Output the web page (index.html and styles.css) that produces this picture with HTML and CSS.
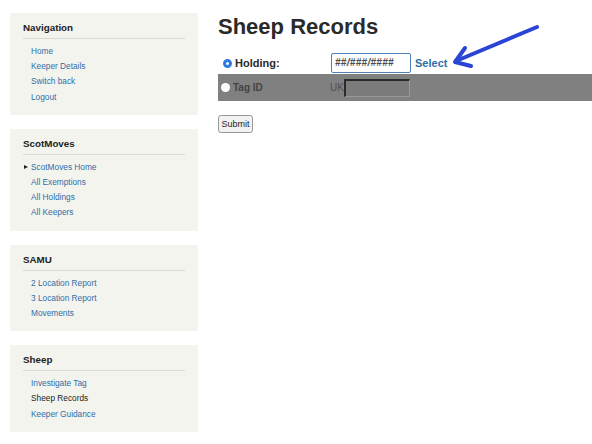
FILE: index.html
```html
<!DOCTYPE html>
<html>
<head>
<meta charset="utf-8">
<link rel="stylesheet" href="styles.css">
</head>
<body>
<div class="page">
  <aside class="sidebar">
    <section class="box">
      <h2 class="box-title">Navigation</h2>
      <ul class="links">
        <li><a href="#">Home</a></li>
        <li><a href="#">Keeper Details</a></li>
        <li><a href="#">Switch back</a></li>
        <li><a href="#">Logout</a></li>
      </ul>
    </section>
    <section class="box">
      <h2 class="box-title">ScotMoves</h2>
      <ul class="links">
        <li class="expanded"><a href="#">ScotMoves Home</a></li>
        <li><a href="#">All Exemptions</a></li>
        <li><a href="#">All Holdings</a></li>
        <li><a href="#">All Keepers</a></li>
      </ul>
    </section>
    <section class="box">
      <h2 class="box-title">SAMU</h2>
      <ul class="links">
        <li><a href="#">2 Location Report</a></li>
        <li><a href="#">3 Location Report</a></li>
        <li><a href="#">Movements</a></li>
      </ul>
    </section>
    <section class="box">
      <h2 class="box-title">Sheep</h2>
      <ul class="links">
        <li><a href="#">Investigate Tag</a></li>
        <li><span class="current">Sheep Records</span></li>
        <li><a href="#">Keeper Guidance</a></li>
      </ul>
    </section>
  </aside>
  <main class="main">
    <h1 class="title">Sheep Records</h1>
    <form class="form">
      <div class="row row-holding">
        <label class="opt"><span class="radio radio-on"></span><span class="opt-label">Holding:</span></label>
        <div class="field">
          <span class="text-input focused">##/###/####</span>
          <a class="select" href="#">Select</a>
        </div>
      </div>
      <div class="row row-tag">
        <label class="opt"><span class="radio radio-off"></span><span class="opt-label tag-label">Tag ID</span></label>
        <div class="field">
          <span class="uk">UK</span><span class="tag-input"></span>
        </div>
      </div>
      <div class="actions">
        <button type="button" class="submit">Submit</button>
      </div>
    </form>
  </main>
</div>
<svg class="arrow" width="592" height="444" viewBox="0 0 592 444">
  <path d="M537 27 L456 61" stroke="#2a44d6" stroke-width="4" stroke-linecap="round" fill="none"/>
  <path d="M465 48 L455 62 L471 66" stroke="#2a44d6" stroke-width="4" stroke-linecap="round" stroke-linejoin="round" fill="none"/>
</svg>
</body>
</html>
```
FILE: styles.css
```css
html, body {
  margin: 0;
  padding: 0;
  background: #fff;
  font-family: "Liberation Sans", Arial, sans-serif;
  color: #222;
}
.page {
  display: flex;
  gap: 20px;
  padding: 13px 0 0 10px;
}
.sidebar {
  width: 188px;
  flex: none;
  display: flex;
  flex-direction: column;
  gap: 14px;
}
.box {
  background: #f4f4ef;
  padding: 8px 13px 10px 13px;
}
.box-title {
  margin: 0;
  font-size: 9.8px;
  line-height: 14px;
  font-weight: bold;
  color: #222;
  padding-bottom: 3px;
  border-bottom: 1px solid #dcdcd6;
}
.links {
  list-style: none;
  margin: 5px 0 0 0;
  padding: 0 0 0 8px;
  font-size: 8.3px;
  line-height: 15.2px;
}
.links a {
  color: #2f6ea6;
  text-decoration: none;
}
.links .current {
  color: #222;
}
.expanded {
  position: relative;
}
.expanded::before {
  content: "";
  position: absolute;
  left: -7px;
  top: 5px;
  border-left: 4px solid #222;
  border-top: 2.5px solid transparent;
  border-bottom: 2.5px solid transparent;
}
.main {
  flex: 1;
}
.title {
  margin: 1px 0 0 0;
  font-size: 22px;
  line-height: 26px;
  font-weight: bold;
  color: #2a2a2a;
}
.form {
  margin-top: 12px;
}
.row {
  display: flex;
  align-items: center;
}
.row-holding {
  height: 22px;
}
.row-tag {
  height: 27px;
  background: #808080;
}
.opt {
  width: 112px;
  display: flex;
  align-items: center;
}
.radio {
  width: 9px;
  height: 9px;
  border-radius: 50%;
  box-sizing: border-box;
  flex: none;
}
.radio-on {
  margin-left: 5px;
  background: #fff;
  border: 3px solid #2f7be6;
}
.radio-off {
  margin-left: 3px;
  background: #fff;
}
.opt-label {
  margin-left: 3px;
  font-size: 11px;
  font-weight: bold;
  color: #2a2a2a;
}
.tag-label {
  font-size: 10px;
  color: #444;
}
.field {
  display: flex;
  align-items: center;
}
.text-input {
  display: inline-block;
  box-sizing: border-box;
  width: 80px;
  height: 20px;
  margin-left: 1px;
  border: 1.5px solid #4d7fb8;
  border-radius: 2px;
  font-size: 10px;
  line-height: 17px;
  padding-left: 3px;
  font-weight: bold;
  font-style: italic;
  color: #4a4a4a;
  letter-spacing: 0.3px;
}
.select {
  margin-left: 4px;
  font-size: 11px;
  font-weight: bold;
  color: #2f6ea6;
  text-decoration: none;
}
.uk {
  font-size: 10px;
  color: #505050;
}
.tag-input {
  display: inline-block;
  box-sizing: border-box;
  width: 66px;
  height: 18px;
  background: #7b7b7b;
  border-top: 2px solid #2a2a2a;
  border-left: 2px solid #2a2a2a;
  border-right: 1px solid #999;
  border-bottom: 1px solid #999;
}
.actions {
  margin-top: 12px;
}
.submit {
  font-family: "Liberation Sans", Arial, sans-serif;
  font-size: 9px;
  height: 18px;
  width: 35px;
  padding: 0;
  background: #f2f2f2;
  border: 1px solid #999;
  border-radius: 3px;
  color: #222;
}
.arrow {
  position: absolute;
  left: 0;
  top: 0;
  pointer-events: none;
}
```
